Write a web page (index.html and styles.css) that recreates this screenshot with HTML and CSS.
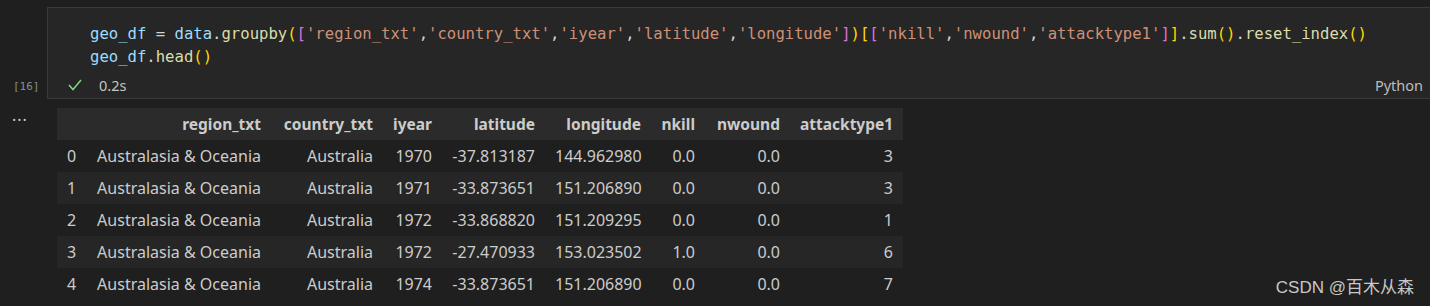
FILE: index.html
```html
<!DOCTYPE html>
<html lang="en">
<head>
    <meta charset="UTF-8">
    <title>geo_df</title>
    <link rel="stylesheet" href="styles.css">
</head>
<body>
    <div class="notebook">
        <!-- input cell -->
        <div class="cell">
            <div class="gutter">
                <span class="exec-count">[16]</span>
            </div>
            <div class="cell-box">
                <pre class="code"><span class="var">geo_df</span> <span class="op">=</span> <span class="var">data</span><span class="op">.</span><span class="fn">groupby</span><span class="b1">(</span><span class="b2">[</span><span class="str">'region_txt'</span><span class="op">,</span><span class="str">'country_txt'</span><span class="op">,</span><span class="str">'iyear'</span><span class="op">,</span><span class="str">'latitude'</span><span class="op">,</span><span class="str">'longitude'</span><span class="b2">]</span><span class="b1">)</span><span class="b1">[</span><span class="b2">[</span><span class="str">'nkill'</span><span class="op">,</span><span class="str">'nwound'</span><span class="op">,</span><span class="str">'attacktype1'</span><span class="b2">]</span><span class="b1">]</span><span class="op">.</span><span class="fn">sum</span><span class="b1">()</span><span class="op">.</span><span class="fn">reset_index</span><span class="b1">()</span>
<span class="var">geo_df</span><span class="op">.</span><span class="fn">head</span><span class="b1">()</span></pre>
                <div class="status">
                    <svg class="check" width="14" height="12" viewBox="0 0 14 12">
                        <path d="M1 6 L5 10.5 L13 1" fill="none" stroke="#89d185" stroke-width="1.5"/>
                    </svg>
                    <span class="duration">0.2s</span>
                    <span class="lang">Python</span>
                </div>
            </div>
        </div>

        <!-- output -->
        <div class="output">
            <div class="gutter">
                <span class="more">···</span>
            </div>
            <table class="frame">
                <thead>
                    <tr>
                        <th class="c-idx"></th>
                        <th class="c-region">region_txt</th>
                        <th class="c-country">country_txt</th>
                        <th class="c-year">iyear</th>
                        <th class="c-lat">latitude</th>
                        <th class="c-lon">longitude</th>
                        <th class="c-kill">nkill</th>
                        <th class="c-wound">nwound</th>
                        <th class="c-type">attacktype1</th>
                    </tr>
                </thead>
                <tbody>
                    <tr><td>0</td><td>Australasia &amp; Oceania</td><td>Australia</td><td>1970</td><td>-37.813187</td><td>144.962980</td><td>0.0</td><td>0.0</td><td>3</td></tr>
                    <tr><td>1</td><td>Australasia &amp; Oceania</td><td>Australia</td><td>1971</td><td>-33.873651</td><td>151.206890</td><td>0.0</td><td>0.0</td><td>3</td></tr>
                    <tr><td>2</td><td>Australasia &amp; Oceania</td><td>Australia</td><td>1972</td><td>-33.868820</td><td>151.209295</td><td>0.0</td><td>0.0</td><td>1</td></tr>
                    <tr><td>3</td><td>Australasia &amp; Oceania</td><td>Australia</td><td>1972</td><td>-27.470933</td><td>153.023502</td><td>1.0</td><td>0.0</td><td>6</td></tr>
                    <tr><td>4</td><td>Australasia &amp; Oceania</td><td>Australia</td><td>1974</td><td>-33.873651</td><td>151.206890</td><td>0.0</td><td>0.0</td><td>7</td></tr>
                </tbody>
            </table>
        </div>
    </div>
    <div class="watermark">CSDN @百木从森</div>
</body>
</html>
```

FILE: styles.css
```css
body {
    margin: 0;
    background: #1f1f1f;
    color: #cccccc;
    font-family: "Noto Sans", "Noto Sans CJK SC", sans-serif;
    overflow: hidden;
}

.notebook {
    padding-top: 7px;
}

.cell,
.output {
    display: flex;
}

.gutter {
    width: 47px;
    flex-shrink: 0;
    position: relative;
}

.exec-count {
    position: absolute;
    left: 13px;
    top: 73px;
    font-family: "DejaVu Sans Mono", monospace;
    font-size: 11px;
    color: #8b8b8b;
}

.cell-box {
    flex: 1;
    margin-right: -4px;
    background: #262626;
    border: 1px solid #3a3a3a;
    height: 90px;
}

.code {
    margin: 0;
    padding: 15px 0 0 42px;
    font-family: "DejaVu Sans Mono", monospace;
    font-size: 15.6px;
    line-height: 23px;
    color: #d4d4d4;
    white-space: pre;
}

.var { color: #9cdcfe; }
.fn { color: #dcdcaa; }
.str { color: #ce9178; }
.op { color: #d4d4d4; }
.b1 { color: #ffd700; }
.b2 { color: #da70d6; }

.status {
    display: flex;
    align-items: center;
    height: 24px;
    margin-top: 4px;
    padding-left: 20px;
    font-size: 14.5px;
}

.check {
    margin-right: 17px;
}

.duration {
    color: #c5c5c5;
}

.lang {
    margin-left: auto;
    margin-right: 10px;
    color: #bdbdbd;
}

.output {
    margin-top: 9px;
}

.more {
    position: absolute;
    left: 12px;
    top: 1px;
    font-size: 16px;
    letter-spacing: 1px;
    color: #cccccc;
}

.frame {
    width: 846px;
    margin-left: 10px;
    border-collapse: collapse;
    table-layout: fixed;
    font-size: 16px;
}

.frame th,
.frame td {
    height: 32px;
    padding: 0 10px;
    text-align: right;
    white-space: nowrap;
    box-sizing: border-box;
}

.frame th {
    font-size: 15.5px;
    font-weight: 700;
    background: #2b2b2b;
}

.frame tbody tr:nth-child(even) {
    background: #262626;
}

.c-idx { width: 29px; }
.c-region { width: 185px; }
.c-country { width: 112px; }
.c-year { width: 59px; }
.c-lat { width: 103px; }
.c-lon { width: 106px; }
.c-kill { width: 54px; }
.c-wound { width: 85px; }
.c-type { width: 113px; }

.watermark {
    position: absolute;
    right: 16px;
    bottom: 8px;
    font-family: "Liberation Sans", "Noto Sans CJK SC", sans-serif;
    font-size: 17px;
    color: #c8c8c8;
}
```
